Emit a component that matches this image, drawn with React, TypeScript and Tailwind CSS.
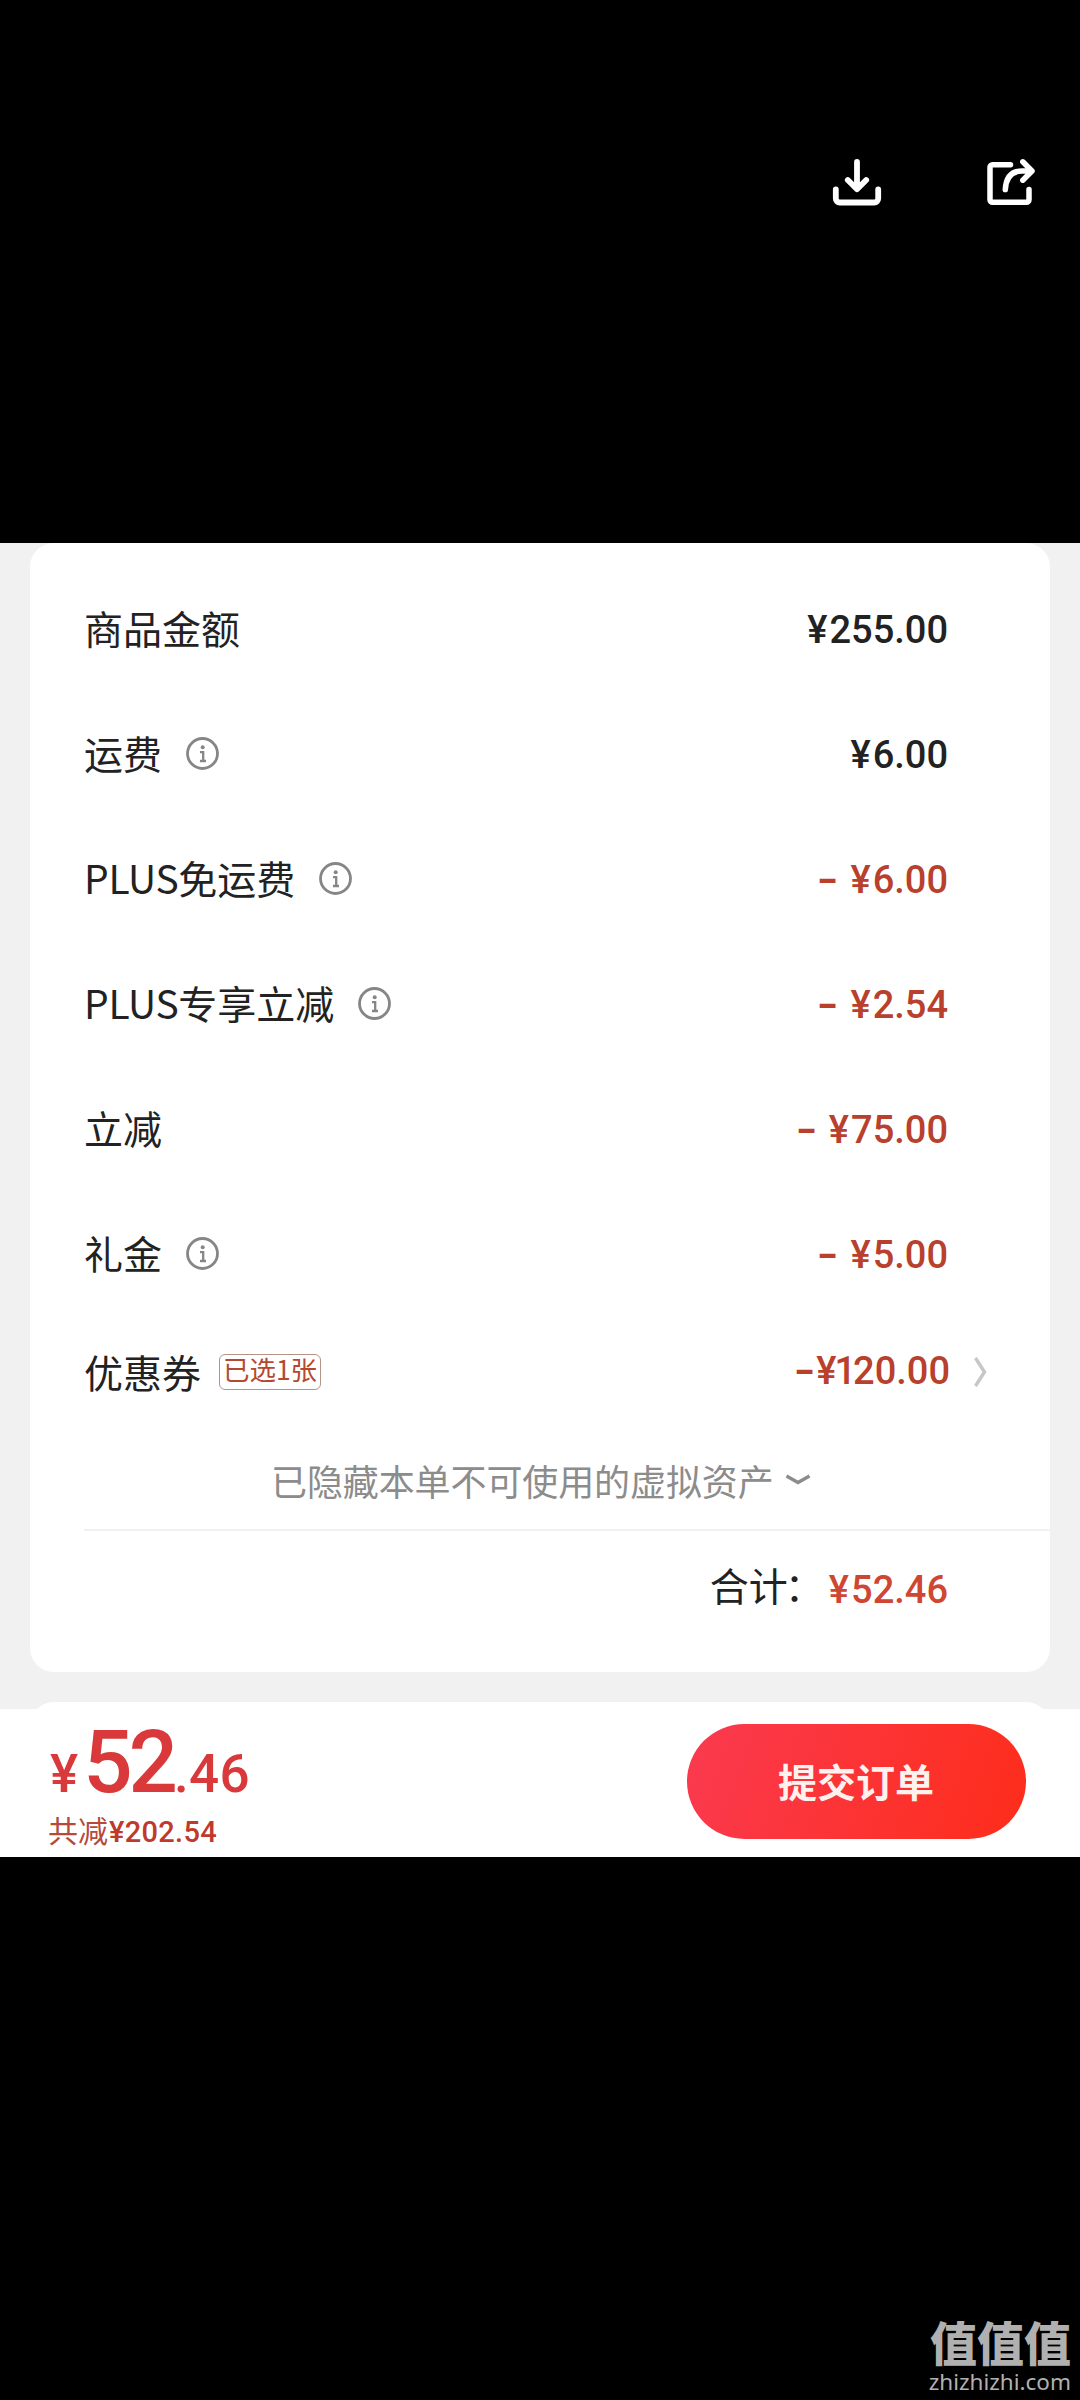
import { clsx } from 'clsx';

interface FeeRow {
  label: string;
  plus?: boolean;
  info?: boolean;
  amount: string;
  discount?: boolean;
}

const feeRows: FeeRow[] = [
  { label: '商品金额', amount: '255.00' },
  { label: '运费', info: true, amount: '6.00' },
  { label: '免运费', plus: true, info: true, amount: '6.00', discount: true },
  { label: '专享立减', plus: true, info: true, amount: '2.54', discount: true },
  { label: '立减', amount: '75.00', discount: true },
  { label: '礼金', info: true, amount: '5.00', discount: true },
];

function DownloadIcon() {
  return (
    <svg width="54" height="54" viewBox="0 0 54 54" fill="none" stroke="#fff" strokeWidth="5.800" strokeLinecap="round" strokeLinejoin="round">
      <path d="M27 8v27M17.800 26 27 35.200l9.200-9.200" />
      <path d="M5.800 35.500v9a4 4 0 0 0 4 4h34.400a4 4 0 0 0 4-4v-9" />
    </svg>
  );
}

function ShareIcon() {
  return (
    <svg width="54" height="54" viewBox="0 0 54 54" fill="none" stroke="#fff" strokeWidth="5.500" strokeLinecap="round" strokeLinejoin="round">
      <path d="M26.500 10.800H8.500a2.500 2.500 0 0 0-2.500 2.500v32.500a2.500 2.500 0 0 0 2.500 2.500h34a2.500 2.500 0 0 0 2.500-2.500V35.500" />
      <path d="M21.300 35.500C22 23 27.500 17 38 17h9" />
      <path d="M38.800 7.800 48 17l-9.200 9.200" />
    </svg>
  );
}

function InfoIcon() {
  return (
    <svg className="mt-[3px]" width="33" height="33" viewBox="0 0 33 33" fill="none" stroke="#868686">
      <circle cx="16.500" cy="16.500" r="15" strokeWidth="2.800" />
      <circle cx="16.700" cy="10.200" r="2" fill="#868686" stroke="none" />
      <path d="M14 15.200h3.200v8.800M14 24h6" strokeWidth="2.300" />
    </svg>
  );
}

function Dash({ className }: { className?: string }) {
  return <span className={clsx('inline-block origin-right scale-x-150 font-bold', className)}>-</span>;
}

export default function App() {
  return (
    <div className="flex h-[2400px] w-[1080px] flex-col bg-black font-['Noto_Sans_CJK_SC',sans-serif] text-[#222]">
      <header className="flex h-[543px] shrink-0 justify-end gap-[100px] pt-[154px] pr-[42px]">
        <DownloadIcon />
        <ShareIcon />
      </header>

      <main className="flex h-[1166px] shrink-0 flex-col overflow-hidden bg-[#f1f1f1] px-[30px]">
        <section className="flex h-[1129px] shrink-0 flex-col rounded-3xl bg-white pt-[21px] pl-[54px]">
          {feeRows.map((row) => (
            <div key={row.label} className="flex h-[125px] shrink-0 items-center justify-between pr-[102px]">
              <div className="flex items-center gap-6 text-[39px] leading-[60px]">
                <span>
                  {row.plus && <span className="tracking-[-0.3px]">PLUS</span>}
                  {row.label}
                </span>
                {row.info && <InfoIcon />}
              </div>
              <div
                className={clsx(
                  "pt-[6px] font-['Roboto',sans-serif] text-[38px] leading-[46px] font-medium",
                  row.discount && 'text-[#b8402c]',
                )}
              >
                {row.discount && <Dash className="mr-[11px]" />}
                <span className="tracking-[2px]">¥</span>
                {row.amount}
              </div>
            </div>
          ))}

          <div className="flex h-[114px] shrink-0 items-center justify-between pr-[63px]">
            <div className="flex items-center">
              <span className="text-[39px] leading-[60px]">优惠券</span>
              <span className="mt-px ml-[18px] flex h-9 w-[102px] items-center justify-center rounded-[6px] border border-[#b59386] pb-[5px] text-[26.500px] leading-[30px] text-[#b5492f]">
                已选1张
              </span>
            </div>
            <div className="flex items-center">
              <span className="font-['Roboto',sans-serif] text-[38px] leading-[46px] font-medium text-[#b8402c]">
                <Dash />
                <span className="tracking-[-2px]">¥</span>
                <span className="tracking-[-3px]">1</span>
                20.00
              </span>
              <svg className="ml-[23px]" width="14" height="32" viewBox="0 0 14 32" fill="none" stroke="#c6c6c6" strokeWidth="3.400">
                <path d="M2.500 3l9 14-9 14" />
              </svg>
            </div>
          </div>

          <div className="flex h-[101px] shrink-0 items-center pt-[2px] pl-[187px] text-[36px] leading-[50px] tracking-[-0.1px] text-[#8c8c8c]">
            已隐藏本单不可使用的虚拟资产
            <svg className="mt-px ml-[11px]" width="26" height="14" viewBox="0 0 26 14" fill="none" stroke="#8c8c8c" strokeWidth="3.400">
              <path d="M1.500 3 13 9.500 24.500 3" />
            </svg>
          </div>

          <div className="h-[2px] shrink-0 bg-[#f1f1f1]" />

          <div className="flex h-[106px] shrink-0 items-center justify-end pr-[102px]">
            <span className="mr-[5px] text-[39px] leading-[60px]">
              合计<span className="-ml-[3px]">：</span>
            </span>
            <span className="pt-[12px] font-['Roboto',sans-serif] text-[38px] leading-[46px] font-medium text-[#cf4632]">
              <span className="tracking-[2px]">¥</span>52.46
            </span>
          </div>
        </section>
        {/* top edge of the next card, cut off by the submit bar */}
        <div className="mt-[30px] h-20 shrink-0 rounded-3xl bg-white" />
      </main>

      <footer className="flex h-[148px] shrink-0 justify-between bg-white pr-[54px] pl-12">
        <div className="flex flex-col">
          <div className="flex h-[102px] items-baseline pt-px font-['Roboto',sans-serif] leading-[104px] font-medium text-[#d9393a]">
            <span className="ml-[2px] text-[53px] tracking-[5px]">¥</span>
            <span className="text-[87px] tracking-[-4px]">52</span>
            <span className="text-[53px] tracking-[0.3px]">.46</span>
          </div>
          <div className="flex items-baseline text-[30px] leading-[36px] text-[#b5493a]">
            共减
            <span className="ml-px font-['Roboto',sans-serif] text-[29px] tracking-[0.3px] font-medium text-[#c03a2c]">¥202.54</span>
          </div>
        </div>
        <button className="mt-[15px] h-[115px] w-[339px] rounded-full bg-linear-[110deg] from-[#fa3a50] to-[#fe2d1a] pr-px pb-[3px] text-[39px] font-bold text-[#fff1ee]">
          提交订单
        </button>
      </footer>

      <div className="mt-auto flex flex-col items-end pr-[9px] pb-[5px] text-[#b0b0b0]">
        <span className="text-[47px] leading-[57px] font-black">值值值</span>
        <span className="font-['Noto_Sans',sans-serif] text-[22.500px] leading-[26px]">zhizhizhi.com</span>
      </div>
    </div>
  );
}
